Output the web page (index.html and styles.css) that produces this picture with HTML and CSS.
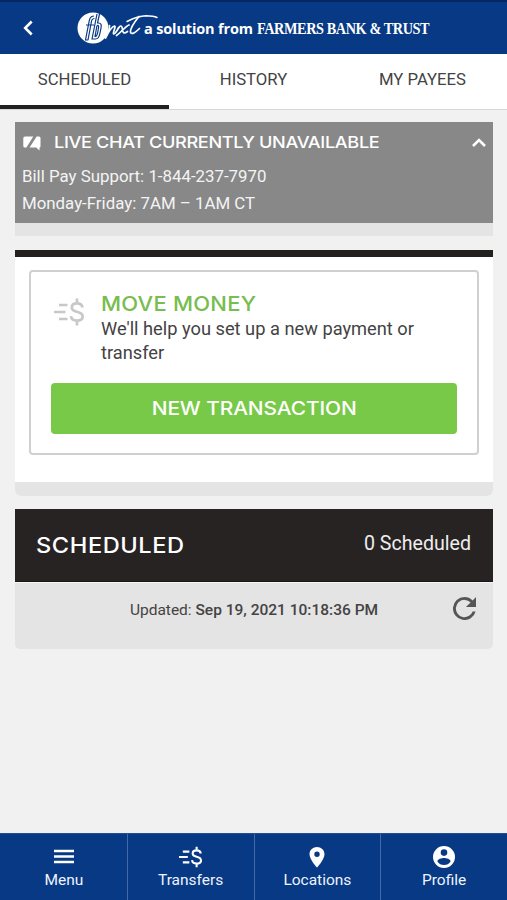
FILE: index.html
```html
<!DOCTYPE html>
<html lang="en">
<head>
<meta charset="utf-8">
<meta name="viewport" content="width=device-width, initial-scale=1">
<title>Bill Pay</title>
<link rel="stylesheet" href="styles.css">
</head>
<body>
<svg class="defs" width="0" height="0">
  <symbol id="money" viewBox="0 0 30 28">
    <g fill="none" stroke="currentColor" stroke-width="2.7">
      <path d="M5 7H13.5M0 14H11.5M5 21H13.5"/>
      <path d="M28.5 9.4C28 6.7 26 5.4 23 5.4C19.7 5.4 17.8 7.1 17.8 9.4C17.8 12 20 13 23 13.8C26.6 14.7 28.7 16 28.7 18.6C28.7 21.1 26.4 22.6 23 22.6C19.7 22.6 17.3 21 17 18.1M23 .6V5.5M23 22.5V27.4"/>
    </g>
  </symbol>
</svg>
<header class="topbar">
  <svg class="back" viewBox="0 0 12 18"><path d="M9.7 2.5L3.2 9L9.7 15.5"/></svg>
  <svg class="logo" viewBox="0 0 84 34">
    <circle cx="16" cy="17" r="15.5" fill="#fff"/>
    <g fill="none" stroke="#073984" stroke-width="1.2" stroke-linejoin="round">
      <path d="M17 5C13 5 12.5 8 11.8 12L8.5 29H11L14 13C14.5 9 15 7.5 17.5 7.5M9 14H17"/>
      <path d="M20 3L15 28H18.5C21.5 28 22.3 26 23 22L24 17C24.7 13.5 24 12 21.5 12H20.5L22.5 3M20 14.5L18 25.5C20 25.5 20.2 24 20.7 21.5L21.5 17C21.8 15 21.5 14.2 20 14.5"/>
    </g>
    <g fill="none" stroke="#fff" stroke-width="1.7" stroke-linecap="round" stroke-linejoin="round">
      <path d="M32.5 14.5C33 17 31 22 28.5 27C31.5 21 35 15.5 37.5 15C39.5 15.5 35.5 21.5 36.5 22.8C37.5 23.5 39.5 20.5 41.5 17"/>
      <path d="M41.5 17C43.5 14 45 14.5 45.3 17.5C45.6 21.5 46.5 23.5 50.5 20.5M52 14C48 15.5 44.5 21 39.5 24.5"/>
      <path d="M62 5.5C57.5 11 53 18 53.5 21.3C54.5 24 58.5 21.5 62.5 17.5"/>
      <path d="M50 10.5C56 7.5 62 5 69 4.8C73 4.8 77 5 80 6.5" stroke-width="1.5"/>
    </g>
  </svg>
  <span class="tagline">a solution from</span>
  <span class="bank">FARMERS BANK &amp; TRUST</span>
</header>
<nav class="tabs">
  <a class="tab active">SCHEDULED</a>
  <a class="tab">HISTORY</a>
  <a class="tab">MY PAYEES</a>
</nav>
<main>
  <section class="chat">
    <div class="chat-head">
      <svg class="chat-icon" viewBox="0 0 18 15"><path fill="#fff" d="M2 .5H10.3L3.4 11.5H2Q.3 11.5.3 10V2Q.3.5 2 .5ZM13.6 .5H16Q17.5.5 17.5 2V10Q17.5 11.5 16.5 11.5V14.5L13.3 11.5H6.6Z"/></svg>
      <h2>LIVE CHAT CURRENTLY UNAVAILABLE</h2>
      <svg class="up" viewBox="0 0 14 9"><path d="M1 8L7 2L13 8"/></svg>
    </div>
    <p class="phone">Bill Pay Support: 1-844-237-7970</p>
    <p class="hours">Monday-Friday: 7AM – 1AM CT</p>
  </section>
  <section class="move">
    <div class="panel">
      <div class="intro">
        <svg class="money-icon"><use href="#money"/></svg>
        <div>
          <h2>MOVE MONEY</h2>
          <p>We'll help you set up a new payment or transfer</p>
        </div>
      </div>
      <button><span>NEW TRANSACTION</span></button>
    </div>
  </section>
  <section class="scheduled">
    <div class="bar"><h2>SCHEDULED</h2><span>0 Scheduled</span></div>
    <div class="updated">
      <p>Updated: <b>Sep 19, 2021 10:18:36 PM</b></p>
      <svg viewBox="4 4 16 16"><path fill="#555" d="M17.65 6.35A7.96 7.96 0 0 0 12 4a8 8 0 1 0 7.73 10h-2.08A6 6 0 1 1 12 6c1.66 0 3.14.69 4.22 1.78L13 11h7V4z"/></svg>
    </div>
  </section>
</main>
<footer>
  <a><svg viewBox="0 0 20 22"><path d="M0 5H20M0 10.5H20M0 16H20" stroke="#fff" stroke-width="2.5"/></svg><span class="menu">Menu</span></a>
  <a><svg class="transfer"><use href="#money"/></svg><span class="transfers">Transfers</span></a>
  <a><svg viewBox="4 1 16 22"><path fill="#fff" d="M12 2C8 2 4.5 5 4.5 9.2C4.5 14.6 12 22.5 12 22.5S19.5 14.6 19.5 9.2C19.5 5 16 2 12 2ZM12 6.5A2.7 2.7 0 1 1 12 11.9A2.7 2.7 0 0 1 12 6.5Z"/></svg><span class="locations">Locations</span></a>
  <a><svg viewBox="2 2 20 20"><path fill="#fff" d="M12 2a10 10 0 1 0 0 20 10 10 0 0 0 0-20zm0 3a3 3 0 1 1 0 6 3 3 0 0 1 0-6zm0 14.2a7.2 7.2 0 0 1-6-3.22c.03-1.99 4-3.08 6-3.08s5.97 1.09 6 3.08a7.2 7.2 0 0 1-6 3.22z"/></svg><span class="profile">Profile</span></a>
</footer>
</body>
</html>
```
FILE: styles.css
```css
* { box-sizing: border-box; }
body { margin: 0; height: 900px; display: flex; flex-direction: column; background: #f1f1f1; font-family: Roboto, sans-serif; color: #434343; overflow: hidden; }
h2, p { margin: 0; }
h2, button { font-family: Inter, sans-serif; font-weight: 500; white-space: nowrap; }
h2 { transform: scaleX(1.1); transform-origin: left; }
.defs { position: absolute; }

.topbar { height: 54px; flex: none; background: #073984; border-top: 2px solid #062763; display: flex; align-items: center; color: #fff; white-space: nowrap; }
.back { width: 12px; height: 18px; margin-left: 22px; }
.back path, .up path { fill: none; stroke: #fff; stroke-width: 2.6; }
.logo { width: 84px; height: 34px; margin-left: 43px; overflow: visible; }
.tagline { font: 700 14.5px "Open Sans", sans-serif; margin-left: -17px; width: 109px; padding-top: 1px; letter-spacing: -.15px; }
.bank { font: 700 16.5px "Liberation Serif", serif; margin-left: 4px; padding-top: 1px; letter-spacing: -.5px; transform: scaleX(.866); transform-origin: left; }

.tabs { height: 56px; flex: none; display: grid; grid-template-columns: repeat(3, 1fr); background: #fff; border-bottom: 1px solid #d8d8d8; }
.tab { display: flex; justify-content: center; padding-top: 16px; font-size: 16.7px; line-height: 19px; }
.active { border-bottom: 4px solid #232020; }

main { flex: 1; padding: 12px 14px 0 15px; }
.chat { height: 114px; background: #888; border-bottom: 13px solid #e4e4e4; color: #fff; padding: 10px 7px 0; font-size: 16.85px; }
.chat-head { display: flex; align-items: center; height: 20px; }
.chat-icon { width: 18px; height: 15px; margin: 2px 0 0 1px; }
.chat h2 { font-size: 16.5px; margin-left: 13px; letter-spacing: -.33px; }
.up { width: 14px; height: 9px; margin-left: auto; }
.chat p { line-height: 27px; color: #f4f4f4; }
.chat .phone { margin-top: 11px; }

.move { margin-top: 14px; height: 246px; background: #fff; border-top: 7px solid #232020; padding: 13px 14px 0; position: relative; border-radius: 0 0 6px 6px; overflow: hidden; }
.move::after { content: ""; position: absolute; left: 0; right: 0; bottom: 0; height: 14px; background: #e4e4e4; }
.panel { height: 185px; border: 2px solid #d0d0d0; border-radius: 4px; padding: 20px 20px 0; }
.intro { display: flex; height: 91px; }
.money-icon { width: 30px; height: 28px; color: #c8c8c8; margin: 6px 17px 0 3px; flex: none; }
.intro h2 { color: #77bd4f; font-size: 20px; line-height: 25px; letter-spacing: .2px; }
.intro p { font-size: 18.25px; line-height: 23.5px; }
button { display: block; width: 406px; height: 51px; padding: 0; border: 0; border-radius: 4px; background: #78c947; color: #fff; font-size: 19px; letter-spacing: -.1px; }
button span { display: inline-block; transform: scaleX(1.1); }

.scheduled { margin-top: 13px; }
.bar { height: 73px; background: #272323; border-bottom: 1px solid #181616; color: #fff; display: flex; justify-content: space-between; align-items: center; padding: 0 22px 4px 21px; }
.bar h2 { font-size: 21.5px; letter-spacing: .5px; padding-top: 4px; }
.bar span { font-size: 19.6px; color: #eee; }
.updated { height: 67px; background: #e4e4e4; border-top: 1px solid #f6f6f6; border-radius: 0 0 5px 5px; position: relative; text-align: center; padding-top: 17px; font-size: 15.5px; line-height: 20px; }
.updated b { font-weight: 500; }
.updated svg { position: absolute; right: 17px; top: 14px; width: 23px; height: 23px; }

footer { height: 67px; flex: none; display: grid; grid-template-columns: repeat(4, 1fr); background: #073984; border-top: 1px solid #244f91; color: #eef4ff; font-size: 15.5px; }
footer a { display: flex; flex-direction: column; align-items: center; padding-top: 12px; border-left: 1px solid #426aa5; }
footer a:first-child { border-left-color: #073984; }
footer svg { width: 22px; height: 22px; color: #fff; }
footer a:first-child svg { width: 20px; }
footer .transfer { width: 23px; }
footer span { line-height: 20px; padding-top: 2px; }
```
